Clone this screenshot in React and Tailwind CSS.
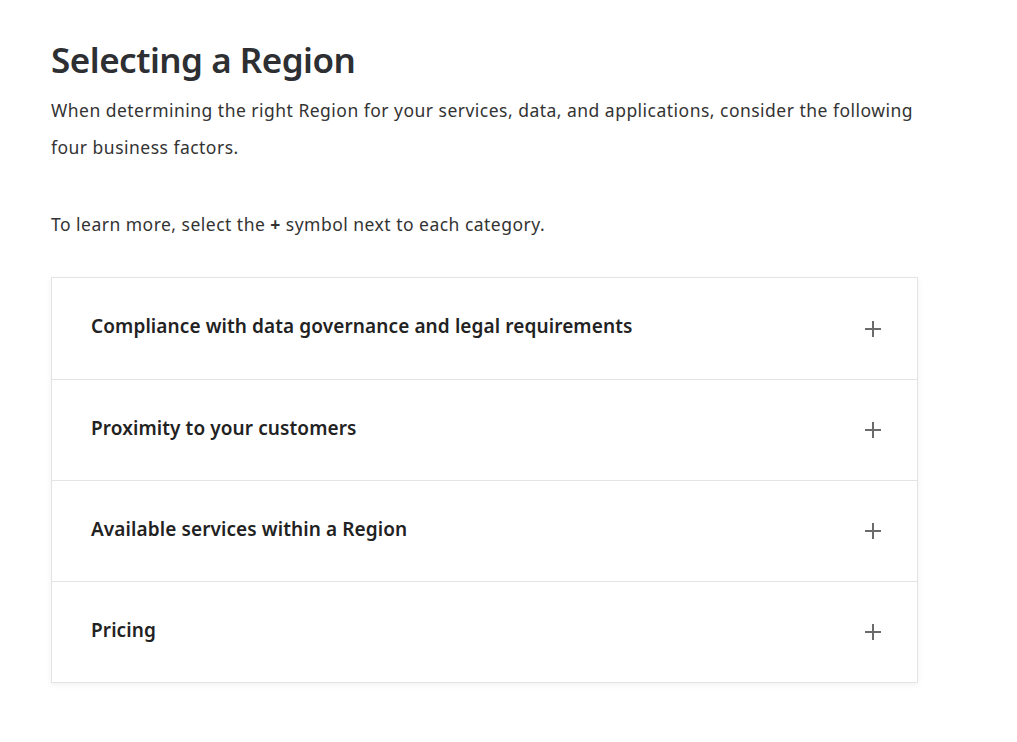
import React from 'react';

const items = [
  'Compliance with data governance and legal requirements',
  'Proximity to your customers',
  'Available services within a Region',
  'Pricing',
];

const PlusIcon = () => (
  <svg className="w-[18px] h-[18px]" viewBox="0 0 18 18" fill="none" stroke="#6b6b6b" strokeWidth="2">
    <path d="M9 1V17M1 9H17" />
  </svg>
);

export default function App() {
  return (
    <div className="min-h-screen bg-white text-[#333] font-['Noto_Sans',sans-serif]">
      <div className="pl-[51px] pt-[36px] w-[918px]">
        <h1 className="text-[35px] leading-[48px] font-semibold text-[#2d2f33] tracking-[-0.5px]">Selecting a Region</h1>
        <p className="mt-[8px] text-[17.5px] leading-[37px] tracking-[0.48px]">
          When determining the right Region for your services, data, and applications, consider the following four business factors.
        </p>
        <p className="mt-[40px] text-[17.5px] leading-[37px] tracking-[0.48px]">
          To learn more, select the <span className="font-bold">+</span> symbol next to each category.
        </p>

        <div className="mt-[34px] border border-[#e4e4e4] bg-white shadow-[0_2px_6px_rgba(0,0,0,0.06)]">
          {items.map((title, i) => (
            <div
              key={title}
              className={`flex items-center justify-between h-[101px] pl-[39px] pr-[35px] ${i > 0 ? 'border-t border-[#e4e4e4]' : ''}`}
            >
              <span className="text-[19px] font-semibold text-[#222] tracking-[0.1px] -mt-[4px]">{title}</span>
              <PlusIcon />
            </div>
          ))}
        </div>
      </div>
    </div>
  );
}
